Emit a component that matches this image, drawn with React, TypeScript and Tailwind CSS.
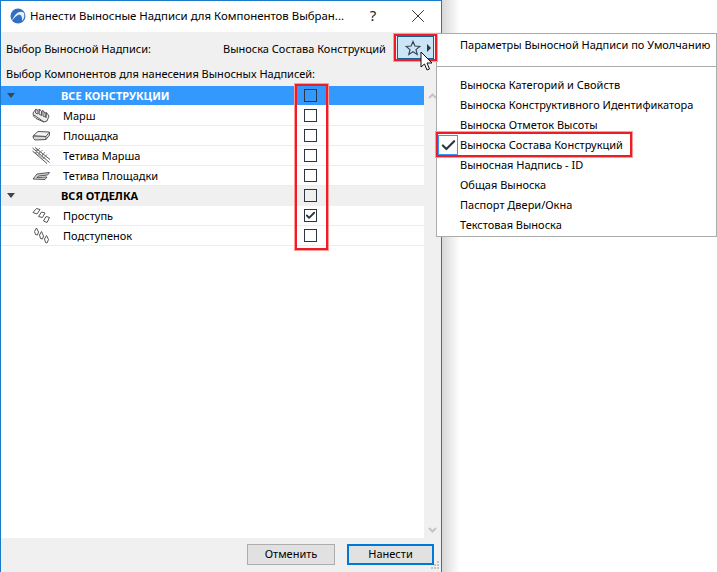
import { Check, X } from "lucide-react";

const FONT = "font-['Noto_Sans','Open_Sans',sans-serif]";

type Row = { label: string; icon?: keyof typeof ICONS; group?: boolean; active?: boolean; checked?: boolean };

const ICONS = {
  flight: (
    <g fill="#fff" stroke="#555" strokeWidth="1">
      <path d="M1 6 L4 2 L6 3.5 L7.5 2 L9.5 4.5 L11 3.5 L13 6 L14.5 5.5 L17 9 L15 14 L12 15 L4 11.5 L1.5 9 Z" fill="#ececec" />
      <path d="M4 2 L3.5 6 L6 7 L6 3.5 M7.5 2 L7 7 L9.5 8.5 L9.5 4.5 M11 3.5 L11 9 L13.5 10 L13 6 M2 8 L12 15 M14.5 5.5 L14 11" fill="none" />
    </g>
  ),
  landing: (
    <g fill="#fff" stroke="#555" strokeWidth="1">
      <path d="M1 9 L6 4.5 L17.5 5 L14 9.5 Z" fill="#f4f4f4" />
      <path d="M1 9 L1.5 11.5 L3 13 L14 12.5 L14 9.5 L1 9 M14 12.5 L17.5 8 L17.5 5" fill="#d8d8d8" />
    </g>
  ),
  stringer: (
    <g fill="none" stroke="#555" strokeWidth="1">
      <path d="M0.5 1 L17.5 15.5 M3 0.5 L18 12.5 M0.5 4 L15 16.5" />
      <path d="M3 6 L8 1 M5.5 8 L10.5 3 M8 10.5 L13 5 M10.5 12.5 L15 7.5 M5 1.5 L4 7 M8 4 L7 9 M11 6.5 L10 11.5" stroke="#888" />
    </g>
  ),
  landingStringer: (
    <g fill="#fff" stroke="#555" strokeWidth="1">
      <path d="M1 12 L5 7 L17.5 5.5 L15.5 8 L6.5 9 L5 10.5 L15 10 L13 12.5 Z" fill="#d8d8d8" />
    </g>
  ),
  tread: (
    <g fill="#fff" stroke="#555" strokeWidth="1">
      <path d="M1 5.5 L4.5 1.5 L8 2.5 L5 7 Z" />
      <path d="M6.5 9.5 L9.5 5 L13 6 L10.5 10.5 Z" />
      <path d="M11.5 14 L14 9.5 L17.5 10.5 L15 15.5 Z" />
    </g>
  ),
  riser: (
    <g fill="#fff" stroke="#555" strokeWidth="1">
      <path d="M2.5 4.5 L4.5 1 L6.5 5 L5.5 8 L3.5 7.5 Z" />
      <path d="M7.5 8 L9.5 4.5 L11.5 9 L10.5 12 L8.5 11.5 Z" />
      <path d="M12.5 12 L14.5 8.5 L16.5 12.5 L15 16 L13.5 15.5 Z" />
    </g>
  ),
};

const ROWS: Row[] = [
  { label: "ВСЕ КОНСТРУКЦИИ", group: true, active: true },
  { label: "Марш", icon: "flight" },
  { label: "Площадка", icon: "landing" },
  { label: "Тетива Марша", icon: "stringer" },
  { label: "Тетива Площадки", icon: "landingStringer" },
  { label: "ВСЯ ОТДЕЛКА", group: true },
  { label: "Проступь", icon: "tread", checked: true },
  { label: "Подступенок", icon: "riser" },
];

const MENU = [
  "Выноска Категорий и Свойств",
  "Выноска Конструктивного Идентификатора",
  "Выноска Отметок Высоты",
  "Выноска Состава Конструкций",
  "Выносная Надпись - ID",
  "Общая Выноска",
  "Паспорт Двери/Окна",
  "Текстовая Выноска",
];

function ListRow({ row }: { row: Row }) {
  return (
    <div
      className={
        "flex h-5 items-center border-b " +
        (row.active ? "border-white bg-[#3399ff]" : row.group ? "border-[#f0f0f0] bg-[#f0f0f0]" : "border-[#ececec] bg-white")
      }
    >
      <div className="flex w-[31px] shrink-0 pl-[6px]">
        {row.group && <div className="h-0 w-0 border-x-[4px] border-t-[5px] border-x-transparent border-t-[#3c4650]" />}
      </div>
      <div className="flex w-[18px] shrink-0 justify-center">
        {row.icon && (
          <svg width="18" height="17" viewBox="0 0 18 17">
            {ICONS[row.icon]}
          </svg>
        )}
      </div>
      <div className={"w-[254px] shrink-0 pt-[1px] " + (row.group ? "pl-[11px] text-[11px] font-bold " + (row.active ? "text-white" : "text-black") : "pl-[13px] text-[11px] text-black")}>
        {row.label}
      </div>
      <div className="flex h-[13px] w-[13px] items-center justify-center border border-[#2b3640]">
        {row.checked && <Check className="h-[11px] w-[11px] text-[#2b3640]" strokeWidth={4} />}
      </div>
    </div>
  );
}

export default function App() {
  return (
    <div className={"relative h-[572px] w-[717px] overflow-hidden bg-white text-[11px] " + FONT}>
      {/* dialog */}
      <div className="flex h-[572px] w-[442px] flex-col border-x border-t border-[#1979ca] bg-[#f0f0f0]">
        <div className="flex h-[31px] shrink-0 items-center bg-white pb-[2px] pl-[9px]">
          <svg width="16" height="16" viewBox="0 0 16 16">
            <circle cx="8" cy="8" r="7.5" fill="#2f6fc4" />
            <path d="M2 13 C5 4 11 2 14 5 C15 8 14 11 12 13 C12.5 9 11 6 8 7 C6 8 4 10 2 13 Z" fill="#e8eef6" />
          </svg>
          <div className="ml-[4px] w-[334px] whitespace-nowrap text-[11.4px] text-black">Нанести Выносные Надписи для Компонентов Выбран...</div>
          <div className="w-[18px] text-center text-[15px] text-[#222]">?</div>
          <div className="ml-[24px] flex w-6 justify-center">
            <X className="h-[22px] w-[22px] text-[#222]" strokeWidth={1} />
          </div>
        </div>

        <div className="flex h-[34px] shrink-0 items-center pl-[5px] pt-[1px] text-black">
          <div className="w-[217px]">Выбор Выносной Надписи:</div>
          <div className="w-[174px]">Выноска Состава Конструкций</div>
          <div className="-mt-[4px] flex h-[23px] w-[37px] items-center gap-[6px] border border-[#1b5f91] bg-[#cce4f7] pl-[7px]">
            <svg width="16" height="16" viewBox="0 0 16 16">
              <path d="M8 1.5 L9.9 6 L14.8 6.4 L11 9.6 L12.2 14.4 L8 11.8 L3.8 14.4 L5 9.6 L1.2 6.4 L6.1 6 Z" fill="none" stroke="#3c4650" strokeWidth="1.2" />
            </svg>
            <div className="h-0 w-0 border-y-[4px] border-l-[4px] border-y-transparent border-l-[#2b3640]" />
          </div>
        </div>

        <div className="flex h-[20px] shrink-0 items-center pb-[4px] pl-[5px] text-black">Выбор Компонентов для нанесения Выносных Надписей:</div>

        <div className="flex min-h-0 flex-1">
          <div className="w-[423px] bg-white">
            {ROWS.map((r) => (
              <ListRow key={r.label} row={r} />
            ))}
          </div>
          <div className="flex w-[17px] flex-col items-center justify-between pb-[5px] pt-[7px] text-[#c4c4c4]">
            <svg width="9" height="6" viewBox="0 0 9 6"><path d="M1 5 L4.5 1.5 L8 5" fill="none" stroke="currentColor" strokeWidth="2" /></svg>
            <svg width="9" height="6" viewBox="0 0 9 6"><path d="M1 1 L4.5 4.5 L8 1" fill="none" stroke="currentColor" strokeWidth="2" /></svg>
          </div>
        </div>

        <div className="flex h-[34px] shrink-0 items-start justify-end gap-[12px] pr-[7px] pt-[6px]">
          <button className="h-[21px] w-[88px] border border-[#adadad] bg-[#e1e1e1] text-[11px] text-black">Отменить</button>
          <button className="h-[21px] w-[87px] border-2 border-[#0078d7] bg-[#e1e1e1] text-[11px] text-black">Нанести</button>
        </div>
      </div>

      {/* shadow right of the dialog */}
      <div className="absolute left-[442px] top-0 h-[33px] w-[18px] bg-gradient-to-r from-[#d8d8d8] to-white" />
      <div className="absolute left-[442px] top-[237px] h-[335px] w-[18px] bg-gradient-to-r from-[#d8d8d8] to-white" />

      {/* size grip */}
      <svg className="absolute left-[431px] top-[561px]" width="9" height="9" viewBox="0 0 9 9" fill="#c4c4c4">
        <rect x="6" y="0" width="2" height="2" />
        <rect x="3" y="3" width="2" height="2" />
        <rect x="6" y="3" width="2" height="2" />
        <rect x="0" y="6" width="2" height="2" />
        <rect x="3" y="6" width="2" height="2" />
        <rect x="6" y="6" width="2" height="2" />
      </svg>

      {/* popup menu */}
      <div className="absolute left-[436px] top-[33px] flex h-[204px] w-[281px] flex-col border border-[#ababab] bg-white pl-[23px] text-black">
        <div className="flex h-[23px] items-center">Параметры Выносной Надписи по Умолчанию</div>
        <div className="-ml-[23px] mb-[8px] mt-[9px] h-px bg-[#ababab]" />
        {MENU.map((m) => (
          <div key={m} className="flex h-5 items-center">{m}</div>
        ))}
      </div>
      <div className="absolute left-[438px] top-[135px] flex h-5 w-5 items-center justify-center border border-[#3399ff]">
        <Check className="h-[17px] w-[17px] text-[#2b3640]" strokeWidth={3} />
      </div>

      {/* red callouts */}
      <div className="absolute left-[394px] top-[34px] h-[27px] w-[43px] border-2 border-[#ee1c25] shadow-[0_0_0_1px_#ff9a9a]" />
      <div className="absolute left-[295px] top-[84px] h-[166px] w-[33px] border-2 border-[#ee1c25] shadow-[0_0_0_1px_#ff9a9a]" />
      <div className="absolute left-[436px] top-[132px] h-[25px] w-[196px] border-2 border-[#ee1c25] shadow-[0_0_0_1px_#ff9a9a]" />

      {/* cursor */}
      <svg className="absolute left-[420px] top-[51px]" width="14" height="21" viewBox="0 0 14 21">
        <path d="M1 1 L1 16 L4.5 13 L7 19 L9.5 18 L7 12 L12 12 Z" fill="#fff" stroke="#111" strokeWidth="1" />
      </svg>
    </div>
  );
}
